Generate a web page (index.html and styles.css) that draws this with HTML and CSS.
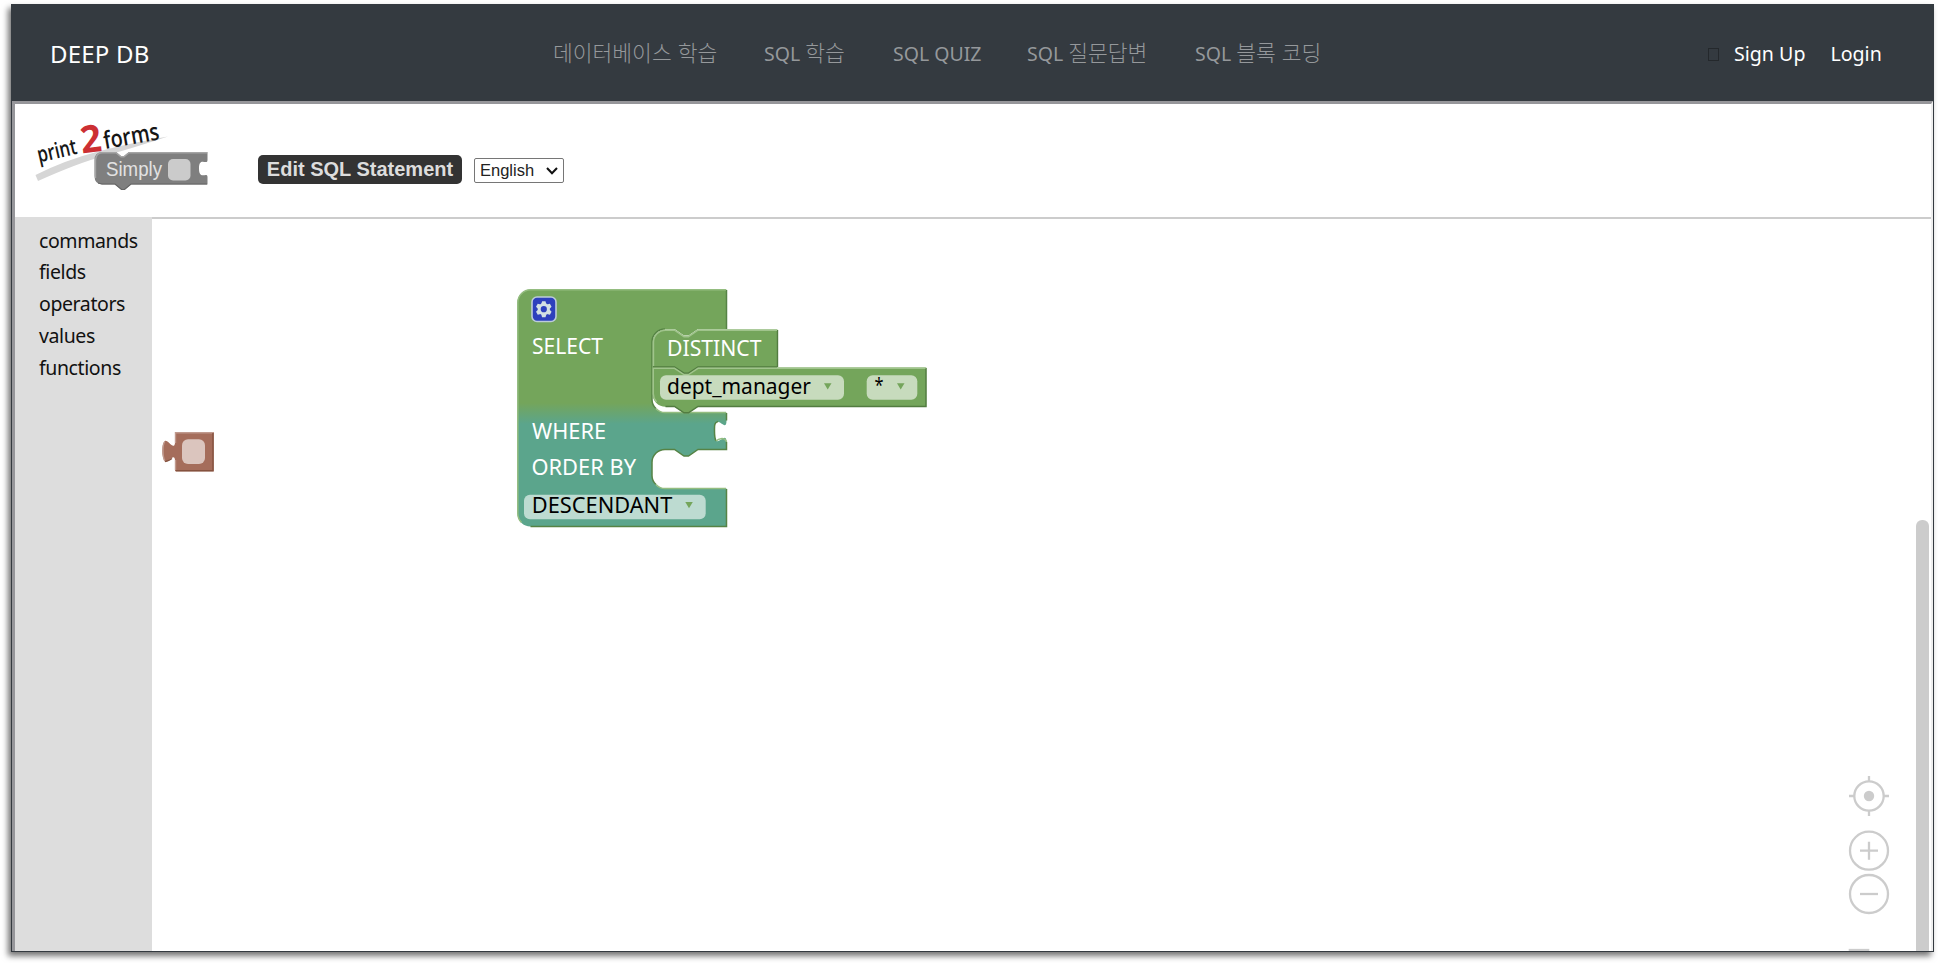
FILE: index.html
```
<!DOCTYPE html>
<html lang="ko">
<head>
<meta charset="utf-8">
<title>DEEP DB</title>
<link rel="stylesheet" href="styles.css">
</head>
<body>
<div class="window">
  <header class="navbar">
    <a class="brand">DEEP DB</a>
    <nav class="menu">
      <a><span class="ko">데이터베이스 학습</span></a>
      <a>SQL <span class="ko">학습</span></a>
      <a>SQL QUIZ</a>
      <a>SQL <span class="ko">질문답변</span></a>
      <a>SQL <span class="ko">블록 코딩</span></a>
    </nav>
    <div class="account">
      <i class="missing"></i>
      <a class="signup">Sign Up</a>
      <a class="login">Login</a>
    </div>
  </header>
  <main class="frame">
    <div class="toolbar">
      <svg class="logo" width="180" height="94" viewBox="32 104 180 94">
        <path d="M35.5 175 Q65 160 100 151 T168 136.500 Q130 149 104 156 T38 181 Z" fill="#d6d6d6"/>
        <g font-family="Open Sans, sans-serif" font-weight="600" fill="#161616">
          <text transform="translate(39 162.500) rotate(-13)" font-size="22" textLength="40" lengthAdjust="spacingAndGlyphs">print</text>
          <text transform="translate(105 149) rotate(-10)" font-size="24" textLength="56" lengthAdjust="spacingAndGlyphs">forms</text>
          <text transform="translate(82 153.500) rotate(-7)" font-size="38" font-weight="700" fill="#cc2f33" textLength="21" lengthAdjust="spacingAndGlyphs">2</text>
        </g>
        <path d="M102 152 H116 L121 156 H124 L129 152 H207.500 V160 C207.500 166 199 156 199 168.500 S207.500 171 207.500 177 V184.500 H131 L124.500 190 H121.500 L115 184.500 H102 Q94.500 184 94.500 176 V160 Q94.500 152.500 102 152 Z" fill="#7f7f7f"/>
        <path d="M95.500 178 V160 Q96 153 102 152.700 H116 L121 156.700 H124 L129 152.700 H207" fill="none" stroke="#a5a5a5" stroke-width="1.400"/>
        <path d="M98 183 L102 184 H115 L121.500 189.500 H124.500 L131 184 H207" fill="none" stroke="#666" stroke-width="1.200"/>
        <rect x="168" y="159" width="22.500" height="21.500" rx="5" fill="#cbcbcb"/>
        <text x="106" y="175.500" font-family="Liberation Sans, sans-serif" font-size="20" fill="#e2e2e2" textLength="56" lengthAdjust="spacingAndGlyphs">Simply</text>
      </svg>
      <button class="edit">Edit SQL Statement</button>
      <div class="language"><span>English</span>
        <svg width="12" height="8" viewBox="0 0 12 8"><path d="M1 1 L6 6.300 L11 1" fill="none" stroke="#111" stroke-width="2"/></svg>
      </div>
    </div>
    <div class="editor">
      <ul class="toolbox">
        <li>commands</li>
        <li>fields</li>
        <li>operators</li>
        <li>values</li>
        <li>functions</li>
      </ul>
      <svg class="workspace" width="1764" height="732" viewBox="152 219 1764 732">
        <defs>
          <linearGradient id="fill" gradientUnits="userSpaceOnUse" x1="0" y1="403" x2="0" y2="424">
            <stop offset="0" stop-color="#74a55b"/><stop offset="1" stop-color="#5ba58c"/>
          </linearGradient>
        </defs>
        <!-- select statement -->
        <path d="M517.500 302.500 A13 13 0 0 1 530.500 289.500 H726.500 V329 H698 L688.500 335.500 H684 L674.500 329 H665 A13 13 0 0 0 652 342 V399.500 A13 13 0 0 0 665 412.500 H726.500 V420.500 C726.500 435 714.500 409 714.500 431.500 S726.500 428 726.500 442.500 V449.500 H698 L688.500 456 H684 L674.500 449.500 H665 A13 13 0 0 0 652 462.500 V475.500 A13 13 0 0 0 665 488.500 H726.500 V526.500 H530.500 A13 13 0 0 1 517.500 513.500 Z" fill="url(#fill)"/>
        <g fill="none" stroke-width="1.500">
          <path d="M726.500 290 V329 M665 329 A13 13 0 0 0 652 342 V399.500 Q652 405 656 408.500 M726.500 413 V420.500 M718 421.500 C714 422.500 714.500 426 714.500 431.500 Q714.500 438 716 441 M726.500 442 V449.500 H698 L688.500 456 H684 L674.500 449.500 H665 A13 13 0 0 0 652 462.500 V475.500 Q652 481 656 484.500 M726.500 489 V526.500 H530.500" stroke="#568345"/>
          <path d="M521.500 522.500 A13 13 0 0 1 517.800 513.500 V302.500 A13 13 0 0 1 530.500 289.700 H726 M656 408.500 Q660 412.600 665 412.600 H726 M716 441 Q718 439 722 438.500 Q726 439 726.500 442 M656 484.500 Q660 488.600 665 488.600 H726" stroke="#94bd80"/>
        </g>
        <path class="green" d="M652.500 368.500 V342.500 A13 13 0 0 1 665.500 329.500 H674.500 L684 336 H688.500 L698 329.500 H777.500 V367.500 H698 L688.500 375 H684 L674.500 368.500 Z"/>
        <path class="green" d="M652.500 367.500 H674.500 L684 374 H688.500 L698 367.500 H926.300 V406.700 H698 L688.500 413 H684 L674.500 406.700 H665.500 A13 13 0 0 1 652.500 393.700 Z"/>
        <g fill="none" stroke-width="1.400">
          <path d="M777.500 330 V367 M653 367 H674.500 L684 373.200 H688.500 L698 367 H777 M926 368 V406.500 H698 L688.500 412.800 H684 L674.500 406.500 H665.500" stroke="#527c40"/>
          <path d="M653.500 366 V342.500 A12 12 0 0 1 665.500 330.200 H674.500 L684 336.700 H688.500 L698 330.200 H777 M656.500 402 Q653.300 398 653.300 393.700 V368.300 H674.500 L684 374.500 H688.500 L698 368.300 H925.500" stroke="#a0c48c"/>
        </g>
        <rect x="532" y="297" width="24" height="24.500" rx="5" fill="#2d40bd" stroke="#bccbd9" stroke-width="1.600"/>
        <g transform="translate(543.800 309.200)">
          <circle r="4.600" fill="none" stroke="#d3e0e3" stroke-width="3"/>
          <g fill="#d3e0e3">
            <path id="tooth" d="M-2.600 -5 L-1.700 -8 H1.700 L2.600 -5 Z"/>
            <use href="#tooth" transform="rotate(60)"/><use href="#tooth" transform="rotate(120)"/><use href="#tooth" transform="rotate(180)"/><use href="#tooth" transform="rotate(240)"/><use href="#tooth" transform="rotate(300)"/>
          </g>
        </g>
        <rect class="field" x="660" y="375.300" width="184" height="24.500" rx="6"/>
        <rect class="field" x="866.700" y="375.300" width="50.600" height="24.500" rx="6"/>
        <rect class="field" x="524" y="494.700" width="181.700" height="24.500" rx="6"/>
        <g fill="#74a55b">
          <path d="M824 383.300 H831.500 L827.700 389.500 Z"/><path d="M897 383.300 H904.500 L900.700 389.500 Z"/><path d="M685.300 502 H692.800 L689 508.300 Z"/>
        </g>
        <g class="label">
          <text x="532" y="353.700" textLength="71" lengthAdjust="spacingAndGlyphs">SELECT</text>
          <text x="532" y="438.700" textLength="74" lengthAdjust="spacingAndGlyphs">WHERE</text>
          <text x="531.500" y="475.300" textLength="104.500" lengthAdjust="spacingAndGlyphs">ORDER BY</text>
          <text x="667" y="356" textLength="94.500" lengthAdjust="spacingAndGlyphs">DISTINCT</text>
        </g>
        <g class="value">
          <text x="667" y="394.300" textLength="144" lengthAdjust="spacingAndGlyphs">dept_manager</text>
          <text x="874.500" y="392" font-size="19" textLength="9" lengthAdjust="spacingAndGlyphs">*</text>
          <text x="531.800" y="513" textLength="140.500" lengthAdjust="spacingAndGlyphs">DESCENDANT</text>
        </g>
        <!-- value block -->
        <path d="M175 432 H213.700 V471.300 H175 V460 C174 452 168 464 165 461.500 Q162.300 458 162.300 451 Q162.300 443 165 441 C168 439.500 174 451 175 443 Z" fill="#a56d5b"/>
        <path d="M175.500 443 V432.700 H213 M175.500 470 V460 M165 461 Q163 458 163 451 Q163 443 165 441.500" fill="none" stroke="#c09a8e" stroke-width="1.400"/>
        <path d="M213 433 V470.700 H176 M165 461.500 Q168 461.500 172 458.500" fill="none" stroke="#85523f" stroke-width="1.400"/>
        <rect x="182" y="439.300" width="23" height="24.700" rx="6" fill="#dbc5be"/>
        <!-- canvas controls -->
        <g fill="none" stroke="#ccc" stroke-width="2.300">
          <circle cx="1869" cy="796" r="14.700"/>
          <path d="M1869 776 V781 M1869 811 V816 M1849 796 H1854 M1884 796 H1889"/>
          <circle cx="1869" cy="796" r="5.200" fill="#ccc" stroke="none"/>
          <circle cx="1869" cy="850.700" r="19"/><path d="M1860 850.700 H1878 M1869 841.700 V859.700"/>
          <circle cx="1869" cy="894" r="19"/><path d="M1860 894 H1878"/>
          <path d="M1848.700 950 H1869.300"/>
        </g>
      </svg>
      <div class="scroll"><div class="thumb"></div></div>
    </div>
  </main>
</div>
</body>
</html>
```
FILE: styles.css
```
* { box-sizing: border-box; }
body {
  margin: 0;
  height: 963px;
  padding: 4px 4px 11px 11px;
  background: #fff;
  overflow: hidden;
  font-family: "Noto Sans", "Noto Sans CJK KR", sans-serif;
}
.window {
  height: 948px;
  display: flex;
  flex-direction: column;
  border: 1px solid #343a40;
  border-top: 0;
  box-shadow: -3px 4px 6px rgba(0, 0, 0, .55);
}
.navbar {
  height: 97px;
  flex: none;
  display: grid;
  grid-template-columns: 541px 1fr 228px;
  align-items: center;
  background: #343a40;
  padding-top: 1px;
  white-space: nowrap;
}
.brand { padding-left: 38px; font-size: 24px; letter-spacing: .2px; color: #fff; }
.menu {
  display: grid;
  grid-template-columns: 211px 129px 134px 168px 1fr;
  align-items: baseline;
  font-size: 19.500px;
  color: #95989b;
}
.ko { font-family: "Noto Sans CJK KR", sans-serif; font-size: 21.500px; font-weight: 300; line-height: 1; }
.account {
  display: flex;
  align-items: center;
  font-size: 19.600px;
  color: #fff;
}
.missing { width: 11px; height: 13px; border: 1px solid #24282c; margin: 3px 15px 0 3px; }
.signup { margin-right: 25px; }
.frame {
  flex: 1;
  min-height: 0;
  display: flex;
  flex-direction: column;
  border: 3px solid #96969a;
  border-right: 2px solid #eee;
  border-bottom: 0;
}
.toolbar {
  height: 115px;
  flex: none;
  display: flex;
  padding-left: 17px;
  border-bottom: 2px solid #ccc;
}
.logo { overflow: visible; }
.edit {
  width: 204px;
  height: 29px;
  margin: 51px 12px 0 46px;
  padding: 0;
  border: 0;
  border-radius: 5px;
  background: #333;
  color: #ddd;
  font: bold 20px "Liberation Sans", sans-serif;
}
.language {
  width: 90px;
  height: 25px;
  margin-top: 54px;
  padding: 0 5px;
  display: flex;
  align-items: center;
  justify-content: space-between;
  border: 1px solid #767676;
  border-radius: 2px;
  color: #222;
  font: 16.500px "Liberation Sans", sans-serif;
}
.editor { flex: 1; min-height: 0; display: flex; }
.toolbox {
  width: 137px;
  margin: -2px 0 0;
  padding: 7.500px 0 0 24px;
  list-style: none;
  background: #ddd;
  font-size: 19.500px;
  letter-spacing: -.4px;
  line-height: 31.900px;
  color: #111;
}
.workspace { flex: none; }
.scroll { flex: 1; padding: 301px 2px 0 0; }
.thumb { height: 100%; border-radius: 6px 6px 0 0; background: #ccc; }
.green { fill: #74a55b; }
.field { fill: #fff; fill-opacity: .6; }
.label { fill: #fff; font-size: 22px; }
.value { fill: #000; font-size: 22px; }
```
